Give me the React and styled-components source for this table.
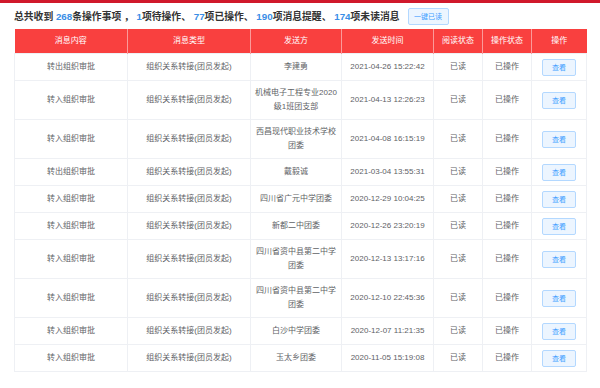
import React from 'react';
import styled, { createGlobalStyle } from 'styled-components';

const GlobalStyle = createGlobalStyle`
    body {
        margin: 0;
        background: #fff;
        font-family: "Liberation Sans", "Noto Sans CJK SC", sans-serif;
    }
`;

const Page = styled.div`
    width: 600px;
    height: 388px;
    border-top: 3px solid #d0182b;
    box-sizing: border-box;
    padding: 0 14px;
`;

const Summary = styled.div`
    display: flex;
    align-items: center;
    height: 26px;
    font-size: 9.8px;
    font-weight: 700;
    color: #333;
    white-space: pre;
`;

const Num = styled.span`
    color: #3a8ee6;
`;

const PlainButton = styled.button`
    display: inline-flex;
    align-items: center;
    justify-content: center;
    height: 17px;
    width: ${(p) => p.width || 34}px;
    margin-left: ${(p) => p.gap || 0}px;
    padding: 0;
    font-family: inherit;
    font-size: 7px;
    font-weight: 400;
    color: #409eff;
    background: #ecf5ff;
    border: 1px solid #b3d8ff;
    border-radius: 2px;
    cursor: pointer;
`;

const Table = styled.table`
    width: 572px;
    border-collapse: collapse;
    table-layout: fixed;
    font-size: 8px;
    line-height: 14.5px;
    color: #606266;
`;

const Th = styled.th`
    height: 24px;
    padding: 0;
    background: #f9403f;
    color: #fff;
    font-weight: 400;
    text-align: center;
    border-left: 1px solid #fb9a9a;
    &:first-child {
        border-left: none;
    }
`;

const Td = styled.td`
    padding: 4.5px 4px;
    text-align: center;
    vertical-align: middle;
    border: 1px solid #eef0f4;
`;

const cols = [113, 123, 91, 92, 49, 49, 55];
const heads = ['消息内容', '消息类型', '发送方', '发送时间', '阅读状态', '操作状态', '操作'];

const rows = [
    ['转出组织审批', '李建勇', '2021-04-26 15:22:42'],
    ['转入组织审批', '机械电子工程专业2020级1班团支部', '2021-04-13 12:26:23'],
    ['转入组织审批', '西昌现代职业技术学校团委', '2021-04-08 16:15:19'],
    ['转出组织审批', '戴毅诚', '2021-03-04 13:55:31'],
    ['转入组织审批', '四川省广元中学团委', '2020-12-29 10:04:25'],
    ['转入组织审批', '新都二中团委', '2020-12-26 23:20:19'],
    ['转入组织审批', '四川省资中县第二中学团委', '2020-12-13 13:17:16'],
    ['转入组织审批', '四川省资中县第二中学团委', '2020-12-10 22:45:36'],
    ['转入组织审批', '白沙中学团委', '2020-12-07 11:21:35'],
    ['转入组织审批', '玉太乡团委', '2020-11-05 15:19:08'],
];

const App = () => (
    <Page>
        <GlobalStyle />
        <Summary>
            总共收到 <Num>268</Num>条操作事项 ， <Num>1</Num>项待操作、 <Num>77</Num>项已操作、 <Num>190</Num>项消息提醒、 <Num>174</Num>项未读消息
            <PlainButton width={41} gap={8}>一键已读</PlainButton>
        </Summary>
        <Table>
            <colgroup>
                {cols.map((w, i) => <col key={i} style={{ width: w }} />)}
            </colgroup>
            <thead>
                <tr>
                    {heads.map((h) => <Th key={h}>{h}</Th>)}
                </tr>
            </thead>
            <tbody>
                {rows.map(([content, sender, time], i) => (
                    <tr key={i}>
                        <Td>{content}</Td>
                        <Td>组织关系转接(团员发起)</Td>
                        <Td>{sender}</Td>
                        <Td>{time}</Td>
                        <Td>已读</Td>
                        <Td>已操作</Td>
                        <Td><PlainButton>查看</PlainButton></Td>
                    </tr>
                ))}
            </tbody>
        </Table>
    </Page>
);

export default App;
